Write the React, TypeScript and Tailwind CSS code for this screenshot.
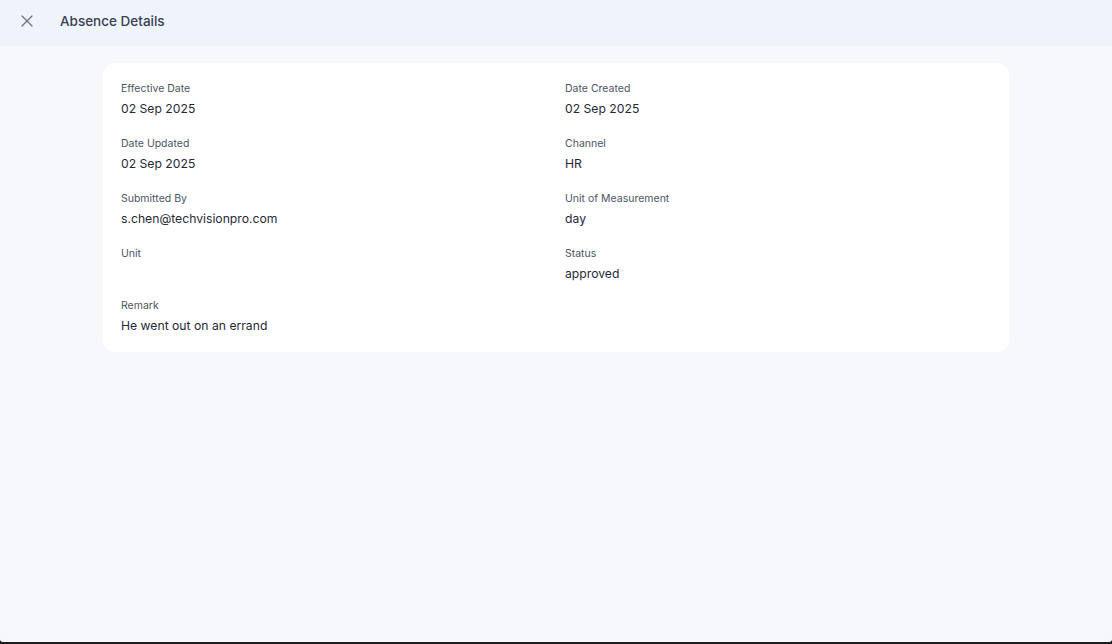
import React from "react";
import { X } from "lucide-react";

const leftFields = [
	{ label: "Effective Date", value: "02 Sep 2025" },
	{ label: "Date Updated", value: "02 Sep 2025" },
	{ label: "Submitted By", value: "s.chen@techvisionpro.com" },
	{ label: "Unit", value: "" },
];

const rightFields = [
	{ label: "Date Created", value: "02 Sep 2025" },
	{ label: "Channel", value: "HR" },
	{ label: "Unit of Measurement", value: "day" },
	{ label: "Status", value: "approved" },
];

function Field({ label, value }: { label: string; value: string }) {
	return (
		<div className="flex flex-col">
			<span className="text-[10.5px] leading-4 text-[#4b5563]">{label}</span>
			<span className="mt-0.5 min-h-5 text-[12.2px] leading-5 text-[#1f2937]">
				{value}
			</span>
		</div>
	);
}

function AbsenceDetails() {
	const rows = leftFields.map((f, i) => [f, rightFields[i]]);

	return (
		<div className="h-[644px] w-full overflow-hidden bg-[#1c1c1e]">
			<div
				className="flex h-[642px] flex-col overflow-hidden rounded-b-[3px] bg-[#f7f8fc]"
				style={{ fontFamily: "Inter, 'Noto Sans', sans-serif" }}
			>
				{/* Header */}
				<header className="flex h-[46px] shrink-0 items-center bg-[#eff3fb] pb-[4px] pl-[17px]">
					<button type="button" className="flex h-5 w-5 items-center justify-center text-[#6b7280]">
						<X size={20} strokeWidth={1.5} />
					</button>
					<h1 className="ml-[23px] text-[13.5px] font-medium text-[#374151]">
						Absence Details
					</h1>
				</header>

				{/* Body */}
				<main className="flex-1 pt-[17px]">
					<div className="mx-auto w-[906px] rounded-xl bg-white px-[18px] pt-[18px] pb-[16px]">
						<div className="grid grid-cols-2 gap-x-[18px] gap-y-[17px]">
							{rows.map(([l, r]) => (
								<React.Fragment key={l.label}>
									<Field label={l.label} value={l.value} />
									<Field label={r.label} value={r.value} />
								</React.Fragment>
							))}
						</div>
						<div className="mt-[14px]">
							<Field label="Remark" value="He went out on an errand" />
						</div>
					</div>
				</main>
			</div>
		</div>
	);
}

export default AbsenceDetails;
